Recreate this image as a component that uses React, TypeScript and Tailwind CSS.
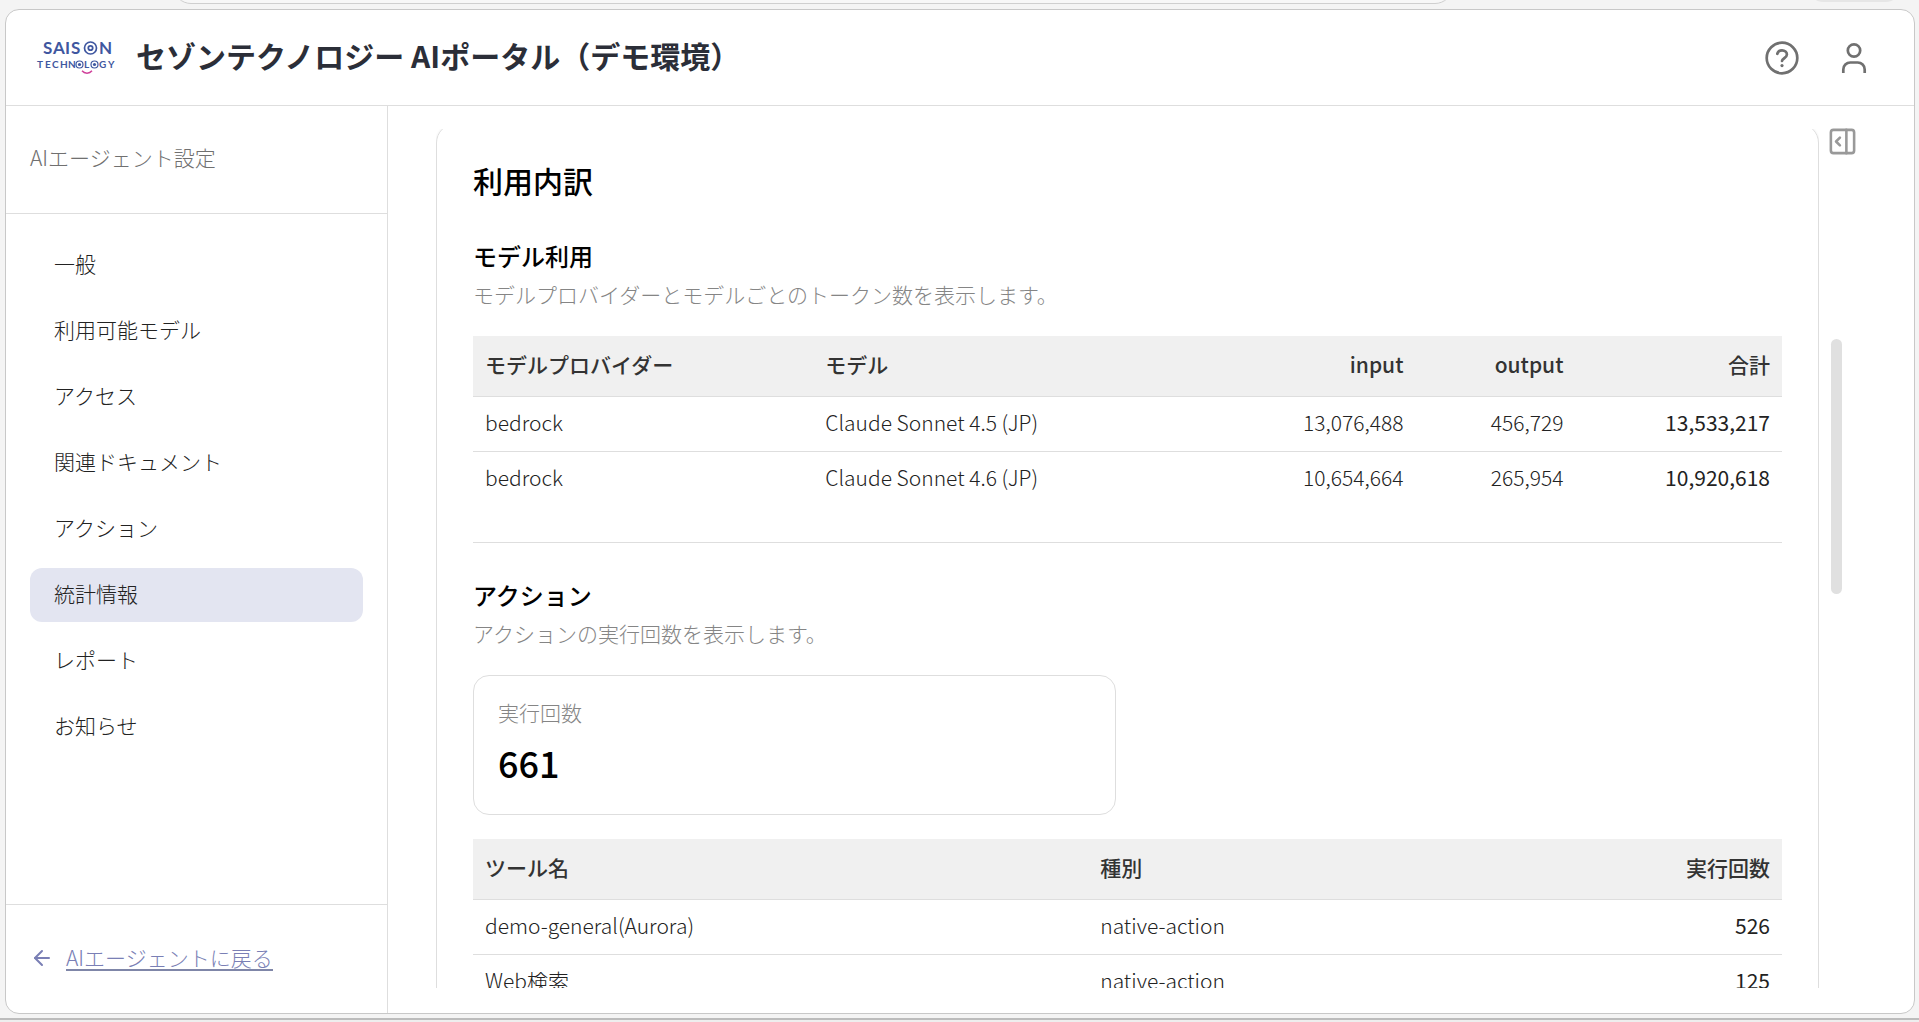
import React from 'react';
import { ArrowLeft, PanelRightOpen } from 'lucide-react';

const navItems = [
  '一般',
  '利用可能モデル',
  'アクセス',
  '関連ドキュメント',
  'アクション',
  '統計情報',
  'レポート',
  'お知らせ',
];

const models = [
  { provider: 'bedrock', model: 'Claude Sonnet 4.5 (JP)', input: '13,076,488', output: '456,729', total: '13,533,217' },
  { provider: 'bedrock', model: 'Claude Sonnet 4.6 (JP)', input: '10,654,664', output: '265,954', total: '10,920,618' },
];

const tools = [
  { name: 'demo-general(Aurora)', kind: 'native-action', count: '526' },
  { name: 'Web検索', kind: 'native-action', count: '125' },
];

function Logo() {
  return (
    <svg
      viewBox="0 0 80 34"
      className="h-[34px] w-20 shrink-0 overflow-visible fill-[#3f57a0] font-['Lato',sans-serif] font-bold"
      role="img"
      aria-label="SAISON TECHNOLOGY"
    >
      <g fontSize="17">
        <text x="7" y="13">S</text>
        <text x="17" y="13">A</text>
        <text x="29" y="13">I</text>
        <text x="35" y="13">S</text>
        <text x="63" y="13">N</text>
      </g>
      <g fontSize="10">
        <text x="1" y="27">T</text>
        <text x="9" y="27">E</text>
        <text x="16" y="27">C</text>
        <text x="24" y="27">H</text>
        <text x="32" y="27">N</text>
        <text x="48" y="27">L</text>
        <text x="63" y="27">G</text>
        <text x="72" y="27">Y</text>
      </g>
      <g fill="none" stroke="#3f57a0">
        <circle cx="54.500" cy="7" r="6" strokeWidth="1.700" />
        <circle cx="54.500" cy="7" r="2.200" strokeWidth="1.800" />
        <circle cx="43.500" cy="23.500" r="3.500" strokeWidth="1.200" />
        <circle cx="58.500" cy="23.500" r="3.500" strokeWidth="1.200" />
      </g>
      <circle cx="43.500" cy="23.500" r="1.600" />
      <circle cx="58.500" cy="23.500" r="1.600" />
      <path d="M46 29.800c2.600 3.200 7.400 3.200 10 0" fill="none" stroke="#d0409a" strokeWidth="1.400" />
    </svg>
  );
}

function HelpIcon() {
  return (
    <svg viewBox="0 0 36 36" className="size-9" fill="none" stroke="#707070" strokeWidth="2.700" strokeLinecap="round">
      <circle cx="18" cy="18" r="15.300" />
      <path d="M13.300 13.800c.5-2 2.300-3.400 4.700-3.400 2.800 0 4.900 1.800 4.900 4.200 0 3.600-4.900 3.600-4.900 6.400" />
      <circle cx="18" cy="25.600" r="1.600" fill="#707070" stroke="none" />
    </svg>
  );
}

function UserIcon() {
  return (
    <svg viewBox="0 0 36 36" className="size-9" fill="none" stroke="#707070" strokeWidth="2.700">
      <circle cx="18" cy="10.500" r="6.200" />
      <path d="M7.300 33v-3.500a7 7 0 0 1 7-7h7.400a7 7 0 0 1 7 7V33" />
    </svg>
  );
}

export default function App() {
  return (
    <div className="flex h-screen flex-col overflow-hidden bg-[#f4f4f4] font-['Noto_Sans_CJK_JP',sans-serif] text-[21px] font-light text-[#222]">
      {/* Lower edge of the browser toolbar */}
      <div className="flex h-[9px] shrink-0 items-end justify-between overflow-hidden pr-4 pb-[5px] pl-[9%]">
        <div className="h-9 w-[74%] shrink-0 rounded-full border border-[#cfcfcf] bg-[#f7f7f7]" />
        <div className="mb-[2px] h-9 w-[97px] shrink-0 rounded-full bg-[#e6e6e6]" />
      </div>

      <div className="mr-1 ml-[5px] flex min-h-0 flex-1 flex-col overflow-hidden rounded-[14px] border border-[#c8c8c8] bg-white">
        <header className="flex h-24 shrink-0 items-center border-b border-[#dedede] pr-[42px] pl-[30px]">
          <Logo />
          <h1 className="ml-5 pb-[6px] text-[30px] leading-10 font-bold text-[#2b2e38]">
            セゾンテクノロジー AIポータル（デモ環境）
          </h1>
          <div className="ml-auto flex items-center gap-9">
            <button type="button" aria-label="ヘルプ">
              <HelpIcon />
            </button>
            <button type="button" aria-label="アカウント">
              <UserIcon />
            </button>
          </div>
        </header>

        <div className="flex min-h-0 flex-1">
          <aside className="flex w-[382px] shrink-0 flex-col border-r border-[#dedede]">
            <div className="flex h-[108px] shrink-0 items-center border-b border-[#dedede] px-6 pb-[3px] text-[#707070]">
              AIエージェント設定
            </div>
            <nav className="flex flex-1 flex-col gap-3 px-6 pt-6">
              {navItems.map((item) => (
                <a
                  key={item}
                  href="#"
                  className={
                    item === '統計情報'
                      ? 'flex h-[54px] items-center rounded-xl bg-[#e3e5f1] px-6 pb-[3px]'
                      : 'flex h-[54px] items-center rounded-xl px-6 pb-[3px]'
                  }
                >
                  {item}
                </a>
              ))}
            </nav>
            <div className="flex h-[109px] shrink-0 items-center gap-3 border-t border-[#dedede] px-6 pb-[2px] text-[#7a7fb5]">
              <ArrowLeft className="size-6" strokeWidth={2} />
              <a href="#" className="border-b-2 border-[#7f86a8] leading-6">
                AIエージェントに戻る
              </a>
            </div>
          </aside>

          <main className="flex min-w-0 flex-1 pt-[23px] pb-[25px] pl-12">
            <div className="min-w-0 flex-1 overflow-hidden">
              {/* Card continues past both ends of the scroll area */}
              <section className="-mt-[6px] rounded-[20px] border border-[#dedede] px-9 pt-9 pb-12 shadow-sm">
                <h2 className="text-[30px] leading-10 font-medium text-black">利用内訳</h2>

                <h3 className="mt-10 text-2xl leading-8 font-medium text-black">モデル利用</h3>
                <p className="mt-[6px] leading-8 text-[#858585]">
                  モデルプロバイダーとモデルごとのトークン数を表示します。
                </p>
                <table className="mt-[26px] w-full table-fixed">
                  <thead>
                    <tr className="h-[60px] border-b border-[#dedede] bg-[#f0f0f0] text-[#333]">
                      <th className="w-[26%] px-3 pb-[2px] text-left font-medium">モデルプロバイダー</th>
                      <th className="w-[32%] px-3 pb-[2px] text-left font-medium">モデル</th>
                      <th className="w-[14%] px-3 pb-[2px] text-right font-medium">input</th>
                      <th className="w-40 px-3 pb-[2px] text-right font-medium">output</th>
                      <th className="px-3 pb-[2px] text-right font-medium">合計</th>
                    </tr>
                  </thead>
                  <tbody>
                    {models.map((row) => (
                      <tr key={row.model} className="h-[55px] border-b border-[#dedede] last:border-b-0">
                        <td className="px-3 pb-[2px]">{row.provider}</td>
                        <td className="px-3 pb-[2px]">{row.model}</td>
                        <td className="px-3 pb-[2px] text-right">{row.input}</td>
                        <td className="px-3 pb-[2px] text-right">{row.output}</td>
                        <td className="px-3 pb-[2px] text-right font-normal">{row.total}</td>
                      </tr>
                    ))}
                  </tbody>
                </table>

                <hr className="mt-9 border-[#dedede]" />

                <h3 className="mt-9 text-2xl leading-8 font-medium text-black">アクション</h3>
                <p className="mt-[6px] leading-8 text-[#858585]">アクションの実行回数を表示します。</p>
                <div className="mt-[26px] h-[140px] w-[49.1%] rounded-2xl border border-[#dedede] px-6 pt-5">
                  <div className="leading-8 text-[#858585]">実行回数</div>
                  <div className="mt-[14px] text-4xl font-medium text-black">661</div>
                </div>
                <table className="mt-6 w-full table-fixed">
                  <thead>
                    <tr className="h-[60px] border-b border-[#dedede] bg-[#f0f0f0] text-[#333]">
                      <th className="w-[47%] px-3 pb-[2px] text-left font-medium">ツール名</th>
                      <th className="w-[27%] px-3 pb-[2px] text-left font-medium">種別</th>
                      <th className="w-[26%] px-3 pb-[2px] text-right font-medium">実行回数</th>
                    </tr>
                  </thead>
                  <tbody>
                    {tools.map((row) => (
                      <tr key={row.name} className="h-[55px] border-b border-[#dedede] last:border-b-0">
                        <td className="px-3 pb-[2px]">{row.name}</td>
                        <td className="px-3 pb-[2px]">{row.kind}</td>
                        <td className="px-3 pb-[2px] text-right font-normal">{row.count}</td>
                      </tr>
                    ))}
                  </tbody>
                </table>
              </section>
            </div>

            <div className="flex w-[95px] shrink-0 flex-col items-start pl-2">
              <button type="button" aria-label="パネルを開く">
                <PanelRightOpen className="-mt-[3px] size-[31px] text-[#999]" strokeWidth={2} />
              </button>
              <div className="mt-[182px] ml-1 h-[255px] w-[11px] rounded-full bg-[#e0e0e0]" />
            </div>
          </main>
        </div>
      </div>

      <div className="mt-[4px] h-[4px] shrink-0 border-t-2 border-[#bcbcbc] bg-[#eee]" />
    </div>
  );
}
